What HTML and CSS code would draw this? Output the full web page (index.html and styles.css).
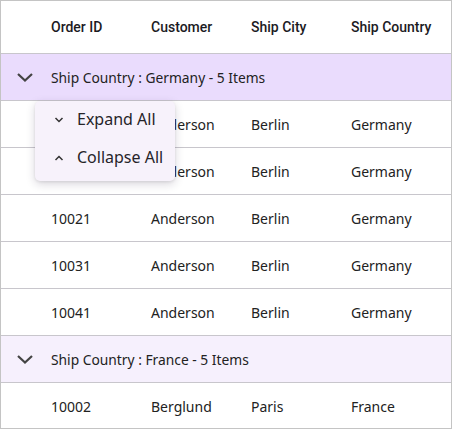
FILE: index.html
```html
<!DOCTYPE html>
<html>
<head>
<meta charset="utf-8">
<link rel="stylesheet" href="styles.css">
</head>
<body>
<div class="grid">
  <div class="row header">
    <div class="cell indent"></div>
    <div class="cell">Order ID</div>
    <div class="cell">Customer</div>
    <div class="cell">Ship City</div>
    <div class="cell">Ship Country</div>
  </div>
  <div class="row group group-active">
    <div class="cell indent"><svg class="chev" width="18" height="10" viewBox="0 0 18 10"><path d="M2 2 L9 8.5 L16 2" fill="none" stroke="#444" stroke-width="2.2"/></svg></div>
    <div class="cell gtext">Ship Country : Germany - 5 Items</div>
  </div>
  <div class="row data"><div class="cell indent"></div><div class="cell">10001</div><div class="cell">Anderson</div><div class="cell">Berlin</div><div class="cell">Germany</div></div>
  <div class="row data"><div class="cell indent"></div><div class="cell">10011</div><div class="cell">Anderson</div><div class="cell">Berlin</div><div class="cell">Germany</div></div>
  <div class="row data"><div class="cell indent"></div><div class="cell">10021</div><div class="cell">Anderson</div><div class="cell">Berlin</div><div class="cell">Germany</div></div>
  <div class="row data"><div class="cell indent"></div><div class="cell">10031</div><div class="cell">Anderson</div><div class="cell">Berlin</div><div class="cell">Germany</div></div>
  <div class="row data"><div class="cell indent"></div><div class="cell">10041</div><div class="cell">Anderson</div><div class="cell">Berlin</div><div class="cell">Germany</div></div>
  <div class="row group">
    <div class="cell indent"><svg class="chev" width="18" height="10" viewBox="0 0 18 10"><path d="M2 2 L9 8.5 L16 2" fill="none" stroke="#444" stroke-width="2.2"/></svg></div>
    <div class="cell gtext">Ship Country : France - 5 Items</div>
  </div>
  <div class="row data last"><div class="cell indent"></div><div class="cell">10002</div><div class="cell">Berglund</div><div class="cell">Paris</div><div class="cell">France</div></div>

  <div class="menu">
    <div class="item"><svg width="10" height="8" viewBox="0 0 10 8"><path d="M1.5 2 L5 5.5 L8.5 2" fill="none" stroke="#333" stroke-width="1.5"/></svg><span>Expand All</span></div>
    <div class="item"><svg width="10" height="8" viewBox="0 0 10 8"><path d="M1.5 6 L5 2.5 L8.5 6" fill="none" stroke="#333" stroke-width="1.5"/></svg><span>Collapse All</span></div>
  </div>
</div>
</body>
</html>
```
FILE: styles.css
```css
html, body { margin: 0; padding: 0; background: #fff; }
.grid {
  position: relative;
  width: 450px;
  height: 427px;
  border: 1px solid #c4c4c4;
  overflow: hidden;
  font-family: "Noto Sans", "Open Sans", sans-serif;
  font-size: 14px;
  color: #222;
}
.row {
  display: grid;
  grid-template-columns: 50px 100px 100px 100px 100px;
  height: 46px;
  border-bottom: 1px solid #c8c6cc;
  align-items: center;
}
.row.last { border-bottom: none; }
.header {
  height: 52px;
  font-family: Roboto, sans-serif;
  font-weight: 500;
  font-size: 14px;
  color: #1c1b1f;
}
.cell { white-space: nowrap; }
.indent { display: flex; justify-content: center; align-items: center; padding-right: 2px; }
.group { background: #f6f0fd; grid-template-columns: 50px 400px; }
.group-active { background: #eadcfd; }
.gtext { font-size: 13.8px; }
.chev { display: block; margin-left: -1px; }
.menu {
  position: absolute;
  left: 34px;
  top: 100px;
  width: 140px;
  height: 80px;
  background: #f7f2fb;
  border-radius: 5px;
  box-shadow: 0 3px 10px rgba(40, 20, 60, 0.18), 0 1px 3px rgba(0,0,0,0.08);
  padding-top: 0;
  box-sizing: border-box;
}
.item {
  display: flex;
  align-items: center;
  height: 38px;
  padding-left: 19px;
  font-size: 16px;
  color: #262429;
}
.item span { position: relative; top: -1px; }
.item svg { margin-right: 13px; }
```
